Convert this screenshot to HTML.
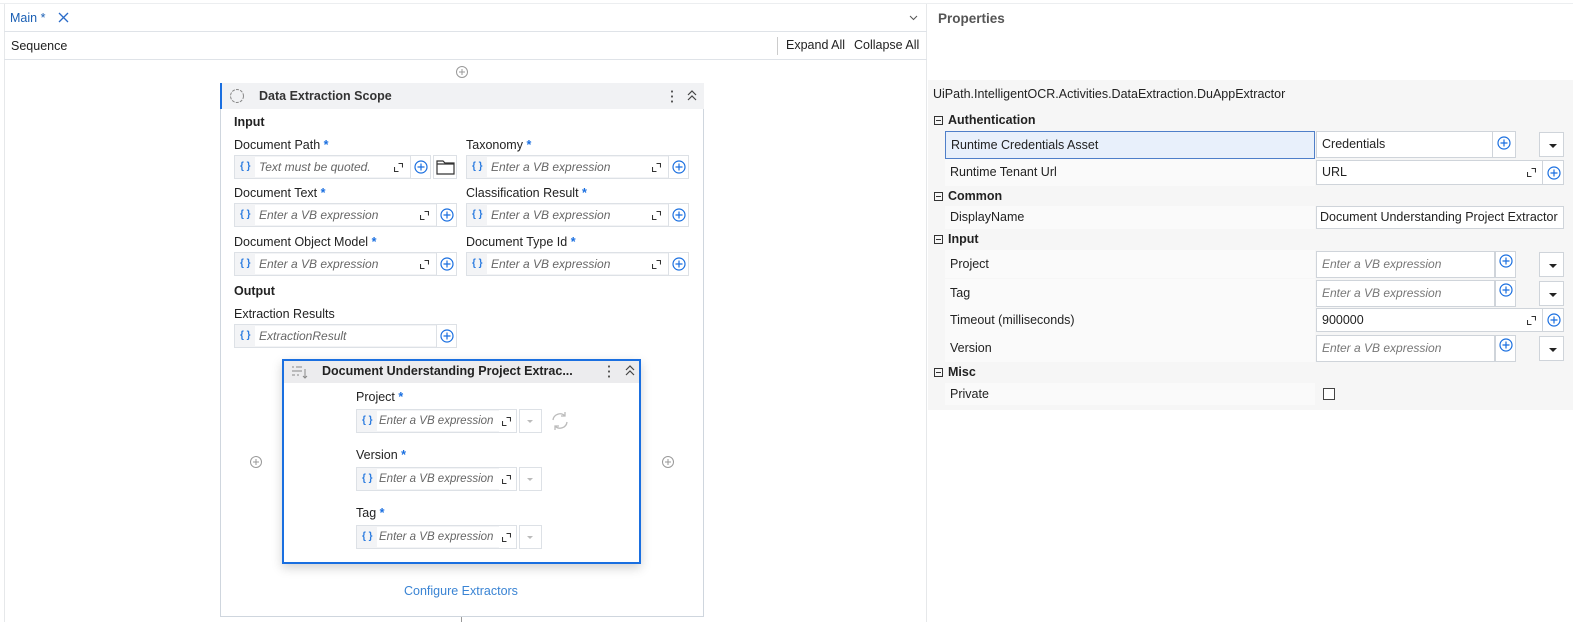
<!DOCTYPE html>
<html><head><meta charset="utf-8"><style>
*{box-sizing:border-box;margin:0;padding:0}
body{width:1573px;height:622px;position:relative;overflow:hidden;background:#fff;font-family:"Liberation Sans",sans-serif;font-size:12.5px;color:#222}
.a{position:absolute}
.lbl{position:absolute;font-size:12.5px;color:#222;white-space:nowrap}
.st{color:#1a6fe0;font-weight:bold}
.fld{position:absolute;height:24px;background:#f3f4f6;border:1px solid #dde1e6}
.fld .br{position:absolute;left:5px;top:0;line-height:22px;font-size:10px;color:#2a7be0;font-weight:bold}
.fld .in{position:absolute;left:20px;top:1px;bottom:1px;background:#fff;padding-left:4px;line-height:20px;font-style:italic;color:#666;font-size:12px;white-space:nowrap;overflow:hidden}
.ex{position:absolute;width:9px;height:9px}
.pl{position:absolute;width:14px;height:14px}
.cell{position:absolute;border-left:1px solid #dde1e6;top:0;bottom:0;background:#fff}
.prow{position:absolute;left:945px;width:370px;background:#fafafa;padding-left:5px;font-size:12.5px}
.sec{position:absolute;left:948px;font-weight:bold;font-size:12.5px}
.box{position:absolute;width:9px;height:9px;border:1px solid #333;left:934px}
.box:after{content:"";position:absolute;left:1px;top:3px;width:5px;height:1px;background:#333}
.pv{position:absolute;left:1316px;background:#fff;border:1px solid #cfd4da;padding-left:5px;font-size:12.5px;white-space:nowrap;overflow:hidden}
.ph{font-style:italic;color:#777;font-size:12px}
.dd{position:absolute;left:1539px;width:25px;background:#fff;border:1px solid #cfd4da}
.dd:after{content:"";position:absolute;left:9px;top:11px;border:4px solid transparent;border-top:4px solid #222;border-bottom:0}
</style></head><body>
<svg width="0" height="0" style="position:absolute"><defs>
<symbol id="p" viewBox="0 0 14 14"><circle cx="7" cy="7" r="6" fill="none" stroke="#1a6fe0" stroke-width="1.2"/><path d="M7 3.5v7M3.5 7h7" stroke="#1a6fe0" stroke-width="1.2"/></symbol>
<symbol id="pg" viewBox="0 0 14 14"><circle cx="7" cy="7" r="5.5" fill="none" stroke="#999" stroke-width="1"/><path d="M7 4v6M4 7h6" stroke="#999" stroke-width="1"/></symbol>
<symbol id="e" viewBox="0 0 9 9"><path d="M0.5 4v4.5h4M4.5 0.5h4v4" fill="none" stroke="#333" stroke-width="1.1"/></symbol>
</defs></svg>

<!-- left panel -->
<div class="a" style="left:4px;top:3px;width:923px;height:619px;border-left:1px solid #e6e8ea;border-right:1px solid #e6e8ea"></div>
<div class="a" style="left:0;top:3px;width:1573px;height:1px;background:#eceef0"></div>
<div class="lbl" style="left:10px;top:11px;color:#1a5fb4">Main <span style="color:#1a5fb4">*</span></div>
<svg class="a" style="left:58px;top:12px" width="11" height="11"><path d="M1 1l9 9M10 1l-9 9" stroke="#2a6bc9" stroke-width="1.3"/></svg>
<svg class="a" style="left:909px;top:15px" width="9" height="6"><path d="M1 1l3.5 3.5L8 1" fill="none" stroke="#555" stroke-width="1"/></svg>
<div class="a" style="left:4px;top:31px;width:923px;height:1px;background:#dfe3e8"></div>
<div class="lbl" style="left:11px;top:39px">Sequence</div>
<div class="a" style="left:777px;top:37px;width:1px;height:18px;background:#ccc"></div>
<div class="lbl" style="left:786px;top:38px">Expand All</div>
<div class="lbl" style="left:854px;top:38px">Collapse All</div>
<div class="a" style="left:4px;top:59px;width:923px;height:1px;background:#dfe3e8"></div>
<svg class="a" style="left:455px;top:65px" width="14" height="14"><use href="#pg"/></svg>

<!-- scope card -->
<div class="a" style="left:220px;top:83px;width:484px;height:534px;border:1px solid #cfd6de;background:#fff"></div>
<div class="a" style="left:220px;top:83px;width:484px;height:26px;background:#f1f2f4;border-left:2px solid #1a6fe0"></div>
<svg class="a" style="left:229px;top:88px" width="16" height="16"><circle cx="8" cy="8" r="6.5" fill="none" stroke="#888" stroke-width="1" stroke-dasharray="3 1.2"/></svg>
<div class="lbl" style="left:259px;top:89px;font-weight:bold;color:#333">Data Extraction Scope</div>
<div class="a" style="left:671px;top:89px;width:2px;height:14px;background:radial-gradient(circle,#555 1px,transparent 1.2px) 0 0/2px 5px"></div>
<svg class="a" style="left:687px;top:90px" width="10" height="11"><path d="M1 5l4-4 4 4M1 10l4-4 4 4" fill="none" stroke="#444" stroke-width="1.2"/></svg>
<div class="lbl" style="left:234px;top:115px;font-weight:bold">Input</div>

<div class="lbl" style="left:234px;top:138px">Document Path <span class="st">*</span></div>
<div class="fld" style="left:234px;top:155px;width:197px"><span class="br">{ }</span><div class="in" style="width:155px">Text must be quoted.</div><svg class="ex" style="left:159px;top:7px"><use href="#e"/></svg><div class="cell" style="left:175px;width:20px"><svg class="pl" style="left:3px;top:4px"><use href="#p"/></svg></div></div>
<div class="a" style="left:433px;top:155px;width:24px;height:24px;border:1px solid #dde1e6;background:#fff"><svg style="position:absolute;left:2px;top:4px" width="19" height="15"><path d="M1 1h6l2 2h9v11H1z M1 4h17" fill="none" stroke="#333" stroke-width="1.2"/></svg></div>

<div class="lbl" style="left:466px;top:138px">Taxonomy <span class="st">*</span></div>
<div class="fld" style="left:466px;top:155px;width:223px"><span class="br">{ }</span><div class="in" style="width:181px">Enter a VB expression</div><svg class="ex" style="left:185px;top:7px"><use href="#e"/></svg><div class="cell" style="left:201px;width:20px"><svg class="pl" style="left:3px;top:4px"><use href="#p"/></svg></div></div>

<div class="lbl" style="left:234px;top:186px">Document Text <span class="st">*</span></div>
<div class="fld" style="left:234px;top:203px;width:223px"><span class="br">{ }</span><div class="in" style="width:181px">Enter a VB expression</div><svg class="ex" style="left:185px;top:7px"><use href="#e"/></svg><div class="cell" style="left:201px;width:20px"><svg class="pl" style="left:3px;top:4px"><use href="#p"/></svg></div></div>
<div class="lbl" style="left:466px;top:186px">Classification Result <span class="st">*</span></div>
<div class="fld" style="left:466px;top:203px;width:223px"><span class="br">{ }</span><div class="in" style="width:181px">Enter a VB expression</div><svg class="ex" style="left:185px;top:7px"><use href="#e"/></svg><div class="cell" style="left:201px;width:20px"><svg class="pl" style="left:3px;top:4px"><use href="#p"/></svg></div></div>

<div class="lbl" style="left:234px;top:235px">Document Object Model <span class="st">*</span></div>
<div class="fld" style="left:234px;top:252px;width:223px"><span class="br">{ }</span><div class="in" style="width:181px">Enter a VB expression</div><svg class="ex" style="left:185px;top:7px"><use href="#e"/></svg><div class="cell" style="left:201px;width:20px"><svg class="pl" style="left:3px;top:4px"><use href="#p"/></svg></div></div>
<div class="lbl" style="left:466px;top:235px">Document Type Id <span class="st">*</span></div>
<div class="fld" style="left:466px;top:252px;width:223px"><span class="br">{ }</span><div class="in" style="width:181px">Enter a VB expression</div><svg class="ex" style="left:185px;top:7px"><use href="#e"/></svg><div class="cell" style="left:201px;width:20px"><svg class="pl" style="left:3px;top:4px"><use href="#p"/></svg></div></div>

<div class="lbl" style="left:234px;top:284px;font-weight:bold">Output</div>
<div class="lbl" style="left:234px;top:307px">Extraction Results</div>
<div class="fld" style="left:234px;top:324px;width:223px"><span class="br">{ }</span><div class="in" style="width:181px">ExtractionResult</div><div class="cell" style="left:201px;width:20px"><svg class="pl" style="left:3px;top:4px"><use href="#p"/></svg></div></div>

<svg class="a" style="left:249px;top:455px" width="14" height="14"><use href="#pg"/></svg>
<svg class="a" style="left:661px;top:455px" width="14" height="14"><use href="#pg"/></svg>

<!-- inner card -->
<div class="a" style="left:282px;top:359px;width:359px;height:205px;border:2px solid #1a6fe0;background:#fff;box-shadow:0 4px 10px rgba(0,0,0,.18)"></div>
<div class="a" style="left:284px;top:361px;width:355px;height:22px;background:#ececee"></div>
<svg class="a" style="left:291px;top:364px" width="17" height="16"><path d="M1 3h2M5 3h6M1 7h10M1 11h3M6 11h2M14 5v9M12 12l2 2 2-2" fill="none" stroke="#888" stroke-width="1"/></svg>
<div class="lbl" style="left:322px;top:364px;font-weight:bold;color:#222">Document Understanding Project Extrac...</div>
<div class="a" style="left:608px;top:364px;width:2px;height:14px;background:radial-gradient(circle,#555 1px,transparent 1.2px) 0 0/2px 5px"></div>
<svg class="a" style="left:625px;top:365px" width="10" height="11"><path d="M1 5l4-4 4 4M1 10l4-4 4 4" fill="none" stroke="#444" stroke-width="1.2"/></svg>

<div class="lbl" style="left:356px;top:390px">Project <span class="st">*</span></div>
<div class="fld" style="left:356px;top:409px;width:161px"><span class="br">{ }</span><div class="in" style="width:122px;padding-left:2px;font-size:11.5px">Enter a VB expression</div><div class="cell" style="left:142px;width:17px;border:0"><svg class="ex" style="left:3px;top:7px"><use href="#e"/></svg></div></div>
<div class="a" style="left:519px;top:409px;width:23px;height:24px;border:1px solid #dde1e6;background:#fff"><div style="position:absolute;left:7px;top:10px;border:3px solid transparent;border-top:3px solid #bbb"></div></div>
<svg class="a" style="left:550px;top:411px" width="20" height="20"><path d="M3 9a7 7 0 0 1 12-4M17 11a7 7 0 0 1-12 4M15 1v4h-4M5 19v-4h4" fill="none" stroke="#bbb" stroke-width="1.3"/></svg>

<div class="lbl" style="left:356px;top:448px">Version <span class="st">*</span></div>
<div class="fld" style="left:356px;top:467px;width:161px"><span class="br">{ }</span><div class="in" style="width:122px;padding-left:2px;font-size:11.5px">Enter a VB expression</div><div class="cell" style="left:142px;width:17px;border:0"><svg class="ex" style="left:3px;top:7px"><use href="#e"/></svg></div></div>
<div class="a" style="left:519px;top:467px;width:23px;height:24px;border:1px solid #dde1e6;background:#fff"><div style="position:absolute;left:7px;top:10px;border:3px solid transparent;border-top:3px solid #bbb"></div></div>

<div class="lbl" style="left:356px;top:506px">Tag <span class="st">*</span></div>
<div class="fld" style="left:356px;top:525px;width:161px"><span class="br">{ }</span><div class="in" style="width:122px;padding-left:2px;font-size:11.5px">Enter a VB expression</div><div class="cell" style="left:142px;width:17px;border:0"><svg class="ex" style="left:3px;top:7px"><use href="#e"/></svg></div></div>
<div class="a" style="left:519px;top:525px;width:23px;height:24px;border:1px solid #dde1e6;background:#fff"><div style="position:absolute;left:7px;top:10px;border:3px solid transparent;border-top:3px solid #bbb"></div></div>

<div class="lbl" style="left:404px;top:584px;color:#3a84d4">Configure Extractors</div>
<div class="a" style="left:461px;top:617px;width:1px;height:5px;background:#999"></div>

<!-- properties -->
<div class="lbl" style="left:938px;top:11px;font-weight:bold;color:#555;font-size:13.5px">Properties</div>
<div class="a" style="left:928px;top:80px;width:645px;height:330px;background:#f6f6f6"></div>
<div class="lbl" style="left:933px;top:87px">UiPath.IntelligentOCR.Activities.DataExtraction.DuAppExtractor</div>

<div class="box" style="top:116px"></div><div class="sec" style="top:113px">Authentication</div>
<div class="prow" style="top:131px;height:28px;line-height:26px;background:#e8f0fb;border:1px solid #4f7fc9">Runtime Credentials Asset</div>
<div class="pv" style="top:131px;width:200px;height:27px;line-height:25px">Credentials<div style="position:absolute;left:175px;top:0;bottom:0;width:23px;border-left:1px solid #cfd4da"><svg class="pl" style="left:4px;top:4px"><use href="#p"/></svg></div></div>
<div class="dd" style="top:132px;height:25px"></div>
<div class="prow" style="top:159px;height:27px;line-height:27px">Runtime Tenant Url</div>
<div class="pv" style="top:160px;width:248px;height:25px;line-height:23px">URL<svg class="ex" style="left:210px;top:7px"><use href="#e"/></svg><div style="position:absolute;left:225px;top:0;bottom:0;width:22px;border-left:1px solid #cfd4da"><svg class="pl" style="left:4px;top:5px"><use href="#p"/></svg></div></div>

<div class="box" style="top:192px"></div><div class="sec" style="top:189px">Common</div>
<div class="prow" style="top:206px;height:23px;line-height:23px">DisplayName</div>
<div class="pv" style="top:206px;width:248px;height:23px;line-height:21px;padding-left:3px">Document Understanding Project Extractor</div>

<div class="box" style="top:235px"></div><div class="sec" style="top:232px">Input</div>
<div class="prow" style="top:250px;height:28px;line-height:28px">Project</div>
<div class="pv ph" style="top:251px;width:179px;height:27px;line-height:25px">Enter a VB expression</div>
<div class="a" style="left:1495px;top:251px;width:21px;height:27px;border:1px solid #cfd4da;background:#fff"><svg class="pl" style="left:3px;top:2px"><use href="#p"/></svg></div>
<div class="dd" style="top:252px;height:25px"></div>
<div class="prow" style="top:279px;height:28px;line-height:28px">Tag</div>
<div class="pv ph" style="top:280px;width:179px;height:27px;line-height:25px">Enter a VB expression</div>
<div class="a" style="left:1495px;top:280px;width:21px;height:27px;border:1px solid #cfd4da;background:#fff"><svg class="pl" style="left:3px;top:2px"><use href="#p"/></svg></div>
<div class="dd" style="top:281px;height:25px"></div>
<div class="prow" style="top:307px;height:27px;line-height:27px">Timeout (milliseconds)</div>
<div class="pv" style="top:308px;width:248px;height:24px;line-height:22px">900000<svg class="ex" style="left:210px;top:7px"><use href="#e"/></svg><div style="position:absolute;left:225px;top:0;bottom:0;width:22px;border-left:1px solid #cfd4da"><svg class="pl" style="left:4px;top:4px"><use href="#p"/></svg></div></div>
<div class="prow" style="top:334px;height:28px;line-height:28px">Version</div>
<div class="pv ph" style="top:335px;width:179px;height:27px;line-height:25px">Enter a VB expression</div>
<div class="a" style="left:1495px;top:335px;width:21px;height:27px;border:1px solid #cfd4da;background:#fff"><svg class="pl" style="left:3px;top:2px"><use href="#p"/></svg></div>
<div class="dd" style="top:336px;height:25px"></div>

<div class="box" style="top:368px"></div><div class="sec" style="top:365px">Misc</div>
<div class="prow" style="top:383px;height:22px;line-height:22px">Private</div>
<div class="a" style="left:1323px;top:388px;width:12px;height:12px;border:1px solid #444;background:#fff"></div>
</body></html>
